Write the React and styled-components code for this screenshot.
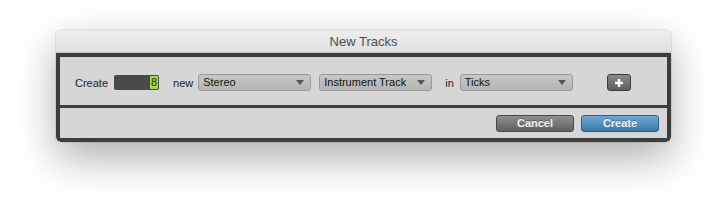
import React from 'react';
import styled, { createGlobalStyle } from 'styled-components';

const GlobalStyle = createGlobalStyle`
    html, body {
        margin: 0;
        padding: 0;
        background: #ffffff;
    }
    body {
        font-family: "Liberation Sans", Arial, sans-serif;
    }
`;

const Page = styled.div`
    width: 727px;
    height: 224px;
    padding: 30px 0 0 56px;
    box-sizing: border-box;
`;

const Window = styled.div`
    width: 615px;
    border-radius: 5px;
    overflow: hidden;
    box-shadow: 0 16px 40px rgba(0, 0, 0, 0.32), 0 0 0 1px rgba(0, 0, 0, 0.08);
`;

const TitleBar = styled.div`
    height: 23px;
    display: flex;
    align-items: center;
    justify-content: center;
    background: linear-gradient(#ededed, #e1e1e1);
    border-bottom: 1px solid #c4c4c4;
    box-sizing: border-box;
    font-size: 13px;
    color: #4d4d4d;
    padding-top: 1px;
`;

const Frame = styled.div`
    background: #3d3d3d;
    padding: 4px;
    display: flex;
    flex-direction: column;
    gap: 3px;
    border-radius: 0 0 5px 5px;
`;

const Panel = styled.div`
    background: #d6d6d6;
    height: ${p => p.$h}px;
    display: flex;
    align-items: center;
    justify-content: ${p => p.$end ? 'flex-end' : 'flex-start'};
    padding: ${p => p.$end ? '1px 8px 0 0' : '3px 0 0 15px'};
    gap: ${p => p.$gap || 0}px;
    box-sizing: border-box;
`;

const Label = styled.span`
    font-size: 11px;
    color: #222;
    margin: 0 ${p => p.$r}px 0 ${p => p.$l}px;
`;

const CountField = styled.div`
    width: 45px;
    height: 15px;
    background: #4a4a4a;
    border-radius: 2px;
    display: flex;
    justify-content: flex-end;
    padding: 1px;
    box-sizing: border-box;
`;

const CountValue = styled.span`
    background: #a5d94a;
    color: #1f2a0a;
    font-size: 11px;
    line-height: 13px;
    width: 8px;
    text-align: center;
    border-radius: 1px;
`;

const Select = styled.div`
    position: relative;
    width: 113px;
    height: 17px;
    border: 1px solid #9a9a9a;
    border-radius: 3px;
    background: linear-gradient(#c7c7c7, #b4b4b4);
    box-sizing: border-box;
    font-size: 11px;
    color: #111;
    line-height: 15px;
    padding-left: 4px;
    margin-right: ${p => p.$mr || 0}px;

    &::after {
        content: '';
        position: absolute;
        right: 6px;
        top: 5px;
        border-left: 4px solid transparent;
        border-right: 4px solid transparent;
        border-top: 5px solid #555;
    }
`;

const PlusButton = styled.button`
    width: 24px;
    height: 17px;
    margin-left: 34px;
    border: 1px solid #3c3c3c;
    border-radius: 3px;
    background: linear-gradient(#8a8a8a, #5e5e5e);
    display: flex;
    align-items: center;
    justify-content: center;
    padding: 0;
`;

const DialogButton = styled.button`
    width: 78px;
    height: 17px;
    border: 1px solid ${p => p.$primary ? '#2d5f86' : '#4a4a4a'};
    border-radius: 3px;
    background: ${p => p.$primary
        ? 'linear-gradient(#6da9d2, #3a79a8)'
        : 'linear-gradient(#8f8f8f, #606060)'};
    color: #f4f4f4;
    font-family: "Liberation Sans", Arial, sans-serif;
    font-weight: bold;
    font-size: 11px;
    line-height: 15px;
    padding: 0;
    text-shadow: 0 -1px 0 rgba(0, 0, 0, 0.3);
`;

function App() {
    return (
        <Page>
            <GlobalStyle />
            <Window>
                <TitleBar>New Tracks</TitleBar>
                <Frame>
                    <Panel $h={48}>
                        <Label $l={0} $r={6}>Create</Label>
                        <CountField>
                            <CountValue>8</CountValue>
                        </CountField>
                        <Label $l={14} $r={5}>new</Label>
                        <Select $mr={8}>Stereo</Select>
                        <Select>Instrument Track</Select>
                        <Label $l={13} $r={6}>in</Label>
                        <Select>Ticks</Select>
                        <PlusButton>
                            <svg width="10" height="10" viewBox="0 0 10 10">
                                <path d="M5 1v8M1 5h8" stroke="#fff" strokeWidth="2.4" />
                            </svg>
                        </PlusButton>
                    </Panel>
                    <Panel $h={30} $end $gap={7}>
                        <DialogButton>Cancel</DialogButton>
                        <DialogButton $primary>Create</DialogButton>
                    </Panel>
                </Frame>
            </Window>
        </Page>
    );
}

export default App;
